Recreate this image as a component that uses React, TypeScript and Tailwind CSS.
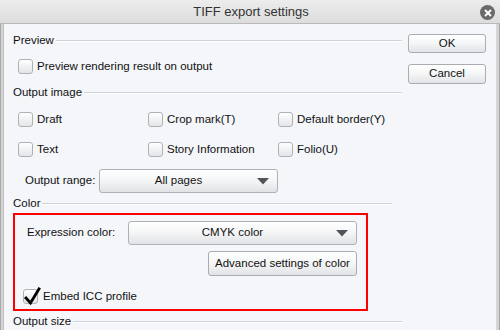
import React from "react";

const font = { fontFamily: '"Liberation Sans", Arial, sans-serif' };

function Box({ checked = false }: { checked?: boolean }) {
  return (
    <div className="relative w-[15px] h-[15px] shrink-0 rounded-[3px] border border-[#aeb2b7] bg-gradient-to-b from-[#ffffff] to-[#e3e5e8]">
      {checked && (
        <svg className="absolute left-[0px] top-[-3px]" width="17" height="19" viewBox="0 0 17 19">
          <path d="M2 11 L6.5 16 L15 2" fill="none" stroke="#000" strokeWidth="2.8" strokeLinecap="square" strokeLinejoin="miter" />
        </svg>
      )}
    </div>
  );
}

function Check({ label, checked = false, className = "" }: { label: string; checked?: boolean; className?: string }) {
  return (
    <div className={"flex items-center gap-[4px] h-[15px] " + className}>
      <Box checked={checked} />
      <span className="text-[11.5px] leading-none text-[#111]">{label}</span>
    </div>
  );
}

function Header({ label, className = "" }: { label: string; className?: string }) {
  return (
    <div className={"flex items-center h-[14px] " + className}>
      <span className="text-[11.5px] leading-none text-[#111] pr-[2px]">{label}</span>
      <div className="flex-1 h-[2px] border-t border-[#cfd3d8] border-b border-b-[#ffffff]" />
    </div>
  );
}

function Dropdown({ text, className = "" }: { text: string; className?: string }) {
  return (
    <div className={"flex items-center h-[24px] rounded-[3px] border border-[#aeb2b7] bg-gradient-to-b from-[#ffffff] via-[#f4f5f6] to-[#e0e2e5] " + className}>
      <div className="flex-1 text-center text-[11.5px] leading-none text-[#111]">{text}</div>
      <svg width="12" height="7" viewBox="0 0 12 7" className="mr-[8px]">
        <path d="M0 0 L12 0 L6 6.5 Z" fill="#505357" />
      </svg>
    </div>
  );
}

function Button({ text, className = "" }: { text: string; className?: string }) {
  return (
    <div className={"flex items-center justify-center rounded-[3px] border border-[#a9adb2] bg-gradient-to-b from-[#ffffff] via-[#f4f5f6] to-[#e1e3e6] text-[11.5px] leading-none text-[#111] " + className}>
      {text}
    </div>
  );
}

export default function App() {
  return (
    <div className="w-[500px] h-[330px] overflow-hidden flex flex-col bg-[#d9d9d9]" style={font}>
      <div className="relative h-[24px] shrink-0 flex items-center justify-center bg-gradient-to-b from-[#ededed] to-[#dcdcdc] border-b border-[#b9b9b9]">
        <span className="text-[13px] leading-none text-[#333] pl-[2px]">TIFF export settings</span>
        <div className="absolute left-[480px] top-[5px] w-[15px] h-[15px] rounded-full bg-[#6a6a6a] flex items-center justify-center">
          <svg width="8" height="8" viewBox="0 0 8 8">
            <path d="M1 1 L7 7 M7 1 L1 7" stroke="#fff" strokeWidth="2" />
          </svg>
        </div>
      </div>
      <div className="flex-1 flex">
        <div className="w-[4px] shrink-0 bg-[#d3d3d3] border-l border-[#a9a9a9] border-r border-r-[#c2c2c2]" />
        <div className="flex-1 flex bg-[#f4f6fa] pl-[9px]">
          <div className="w-[389px] flex flex-col">
            <Header label="Preview" className="mt-[10px]" />
            <Check label="Preview rendering result on output" className="mt-[11px] ml-[5px]" />
            <Header label="Output image" className="mt-[12px]" />
            <div className="grid grid-cols-[130px_130px_1fr] mt-[12px] ml-[5px]">
              <Check label="Draft" />
              <Check label="Crop mark(T)" />
              <Check label="Default border(Y)" />
            </div>
            <div className="grid grid-cols-[130px_130px_1fr] mt-[15px] ml-[5px]">
              <Check label="Text" />
              <Check label="Story Information" />
              <Check label="Folio(U)" />
            </div>
            <div className="flex items-center mt-[12px] ml-[12px]">
              <span className="w-[74px] text-[11.5px] leading-none text-[#111]">Output range:</span>
              <Dropdown text="All pages" className="w-[179px]" />
            </div>
            <Header label="Color" className="mt-[4px] mr-[10px]" />
            <div className="mt-[2px] w-[355px] border-2 border-[#ff0000] flex flex-col pt-[6px] pb-[5px] pl-[12px] pr-[9px]">
              <div className="flex items-center">
                <span className="w-[101px] text-[11.5px] leading-none text-[#111]">Expression color:</span>
                <Dropdown text="CMYK color" className="flex-1" />
              </div>
              <div className="flex justify-end mt-[6px]">
                <Button text="Advanced settings of color" className="w-[149px] h-[25px]" />
              </div>
              <Check label="Embed ICC profile" checked className="mt-[13px] -ml-[4px] gap-[5px]" />
            </div>
            <Header label="Output size" className="mt-[4px]" />
          </div>
          <div className="flex flex-col ml-[6px]">
            <Button text="OK" className="w-[78px] h-[19px] mt-[10px]" />
            <Button text="Cancel" className="w-[78px] h-[20px] mt-[11px]" />
          </div>
          <div className="flex-1" />
          <div className="w-[1px] bg-[#d5d8dc]" />
        </div>
        <div className="w-[3px] shrink-0 bg-[#d3d3d3] border-r border-[#a9a9a9]" />
      </div>
    </div>
  );
}
